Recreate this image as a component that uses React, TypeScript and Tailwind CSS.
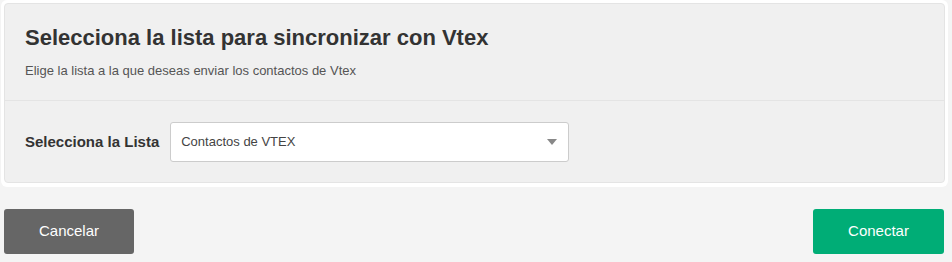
export default function App() {
  return (
    <div className="w-[952px] h-[262px] bg-[#f4f4f4] font-['Liberation_Sans',Arial,sans-serif] text-[#333]">
      <div className="pl-[1px] pr-[4px] pt-0">
        <div className="bg-white rounded-[6px] p-[3px] pb-[4px]">
          <div className="bg-[#f0f0f0] border border-[#e4e4e4] rounded-[4px]">
            <div className="px-[20px] pt-[20px] pb-[21px] border-b border-[#e4e4e4]">
              <h1 className="text-[22px] font-bold leading-[28px] text-[#333]">Selecciona la lista para sincronizar con Vtex</h1>
              <p className="mt-[11px] text-[13px] leading-[16px] text-[#555]">Elige la lista a la que deseas enviar los contactos de Vtex</p>
            </div>
            <div className="flex items-center px-[20px] pt-[21px] pb-[20px]">
              <span className="text-[15px] font-bold text-[#333] mr-[11px]">Selecciona la Lista</span>
              <div className="w-[399px] h-[40px] bg-white border border-[#ccc] rounded-[3px] flex items-center justify-between pl-[10px] pr-[11px]">
                <span className="text-[13px] text-[#444]">Contactos de VTEX</span>
                <svg width="10" height="6" viewBox="0 0 10 6"><path d="M0 0 L10 0 L5 6 Z" fill="#888" /></svg>
              </div>
            </div>
          </div>
        </div>
      </div>
      <div className="flex justify-between pl-[4px] pr-[8px] mt-[22px]">
        <button className="w-[130px] h-[45px] bg-[#666] rounded-[3px] text-white text-[15px]">Cancelar</button>
        <button className="w-[131px] h-[45px] bg-[#00ad76] rounded-[3px] text-white text-[15px]">Conectar</button>
      </div>
    </div>
  );
}
